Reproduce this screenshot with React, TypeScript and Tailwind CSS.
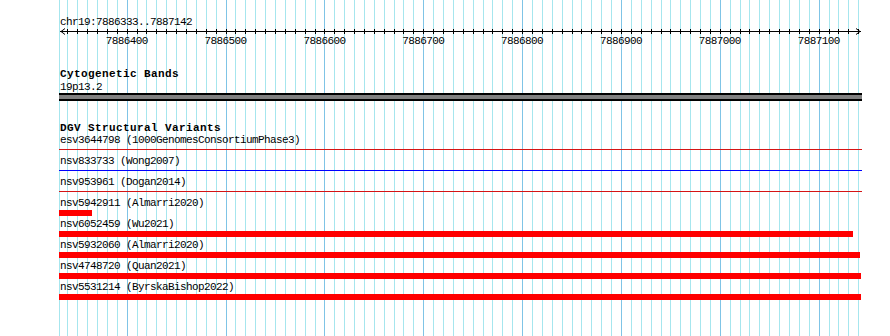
import * as React from "react";

// view: chr19:7886333..7887142, 100bp major / 10bp minor
const X0 = 126.7; // x of 7886400
const BP = 0.98857; // px per bp
const xOf = (bp: number) => X0 + (bp - 7886400) * BP;

const minor: number[] = [];
for (let bp = 7886340; bp <= 7887140; bp += 10) minor.push(bp);
const major = minor.filter((bp) => bp % 100 === 0);

const px = (x: number) => Math.round(x) + 0.5;

function Grid() {
  return (
    <svg className="absolute left-0 top-0" width={890} height={336}>
      <line x1={59.5} x2={59.5} y1={0} y2={336} stroke="#a6e6ee" />
      {minor.map((bp) => (
        <line
          key={bp}
          x1={px(xOf(bp))}
          x2={px(xOf(bp))}
          y1={0}
          y2={336}
          stroke={bp % 100 === 0 ? "#7fc4e6" : "#a6e6ee"}
        />
      ))}
    </svg>
  );
}

function Ruler() {
  return (
    <svg width={803} height={20} viewBox="59 28 803 20" className="block">
      <line x1={60} x2={861} y1={31.5} y2={31.5} stroke="#000" />
      <polyline points="65,28.5 61,31.5 65,34.5" fill="none" stroke="#000" />
      <polyline points="856,28.5 860,31.5 856,34.5" fill="none" stroke="#000" />
      {minor.map((bp) => (
        <line key={bp} x1={px(xOf(bp))} x2={px(xOf(bp))} y1={29} y2={34} stroke="#000" />
      ))}
      {major.map((bp) => (
        <text
          key={bp}
          x={xOf(bp)}
          y={44}
          textAnchor="middle"
          fontSize={11}
          fontFamily="'Liberation Mono', monospace"
          letterSpacing={-0.6}
          fill="#000"
        >
          {bp}
        </text>
      ))}
    </svg>
  );
}

// chromosome band ideogram (19p13.2 fills the view)
function Band() {
  return (
    <svg width={803} height={8} className="block">
      <rect x={0} y={0} width={803} height={8} fill="#000" />
      <rect x={0} y={2} width={803} height={4} fill="#808080" />
    </svg>
  );
}

type Feature = { label: string; kind: "line" | "bar"; color: string; width: number };

const variants: Feature[] = [
  { label: "esv3644798 (1000GenomesConsortiumPhase3)", kind: "line", color: "#d41414", width: 803 },
  { label: "nsv833733 (Wong2007)", kind: "line", color: "#0000ff", width: 803 },
  { label: "nsv953961 (Dogan2014)", kind: "line", color: "#d41414", width: 803 },
  { label: "nsv5942911 (Almarri2020)", kind: "bar", color: "#ff0000", width: 33 },
  { label: "nsv6052459 (Wu2021)", kind: "bar", color: "#ff0000", width: 794 },
  { label: "nsv5932060 (Almarri2020)", kind: "bar", color: "#ff0000", width: 801 },
  { label: "nsv4748720 (Quan2021)", kind: "bar", color: "#ff0000", width: 802 },
  { label: "nsv5531214 (ByrskaBishop2022)", kind: "bar", color: "#ff0000", width: 802 },
];

function Row({ f }: { f: Feature }) {
  return (
    <div className="h-[21px]">
      <div className="h-3 pl-px whitespace-nowrap">{f.label}</div>
      {f.kind === "line" ? (
        <div className="mt-[3px] h-px" style={{ width: f.width, background: f.color }} />
      ) : (
        <div className="mt-px h-[6px]" style={{ width: f.width, background: f.color }} />
      )}
    </div>
  );
}

export default function App() {
  return (
    <div className="relative w-[890px] h-[336px] overflow-hidden bg-white font-['Liberation_Mono',monospace] text-[11px] leading-[12px] tracking-[-0.6px] text-black">
      <Grid />
      <div className="relative flex flex-col pl-[59px] pt-4">
        <div className="h-3 pl-px">chr19:7886333..7887142</div>
        <Ruler />
        <div className="mt-5 h-3 pl-px font-bold tracking-[0.4px]">Cytogenetic Bands</div>
        <div className="mt-px h-3 pl-px">19p13.2</div>
        <Band />
        <div className="mt-[21px] h-3 pl-px font-bold tracking-[0.4px]">DGV Structural Variants</div>
        {variants.map((f) => (
          <Row key={f.label} f={f} />
        ))}
      </div>
    </div>
  );
}
